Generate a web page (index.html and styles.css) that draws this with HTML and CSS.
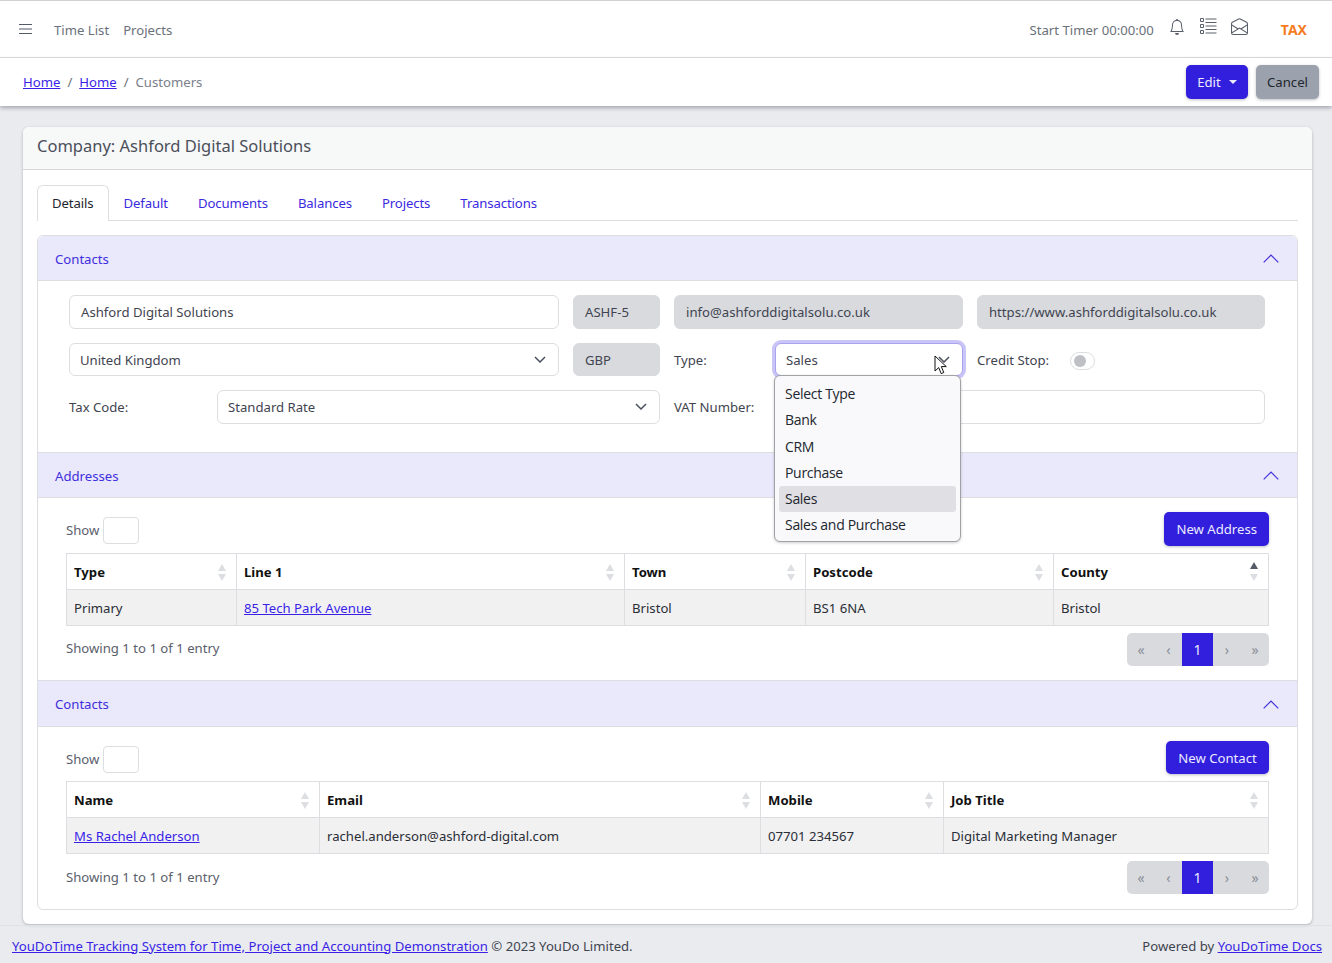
FILE: index.html
```html
<!DOCTYPE html>
<html lang="en">
<head>
    <meta charset="UTF-8">
    <meta name="viewport" content="width=device-width, initial-scale=1.0">
    <title>Company: Ashford Digital Solutions</title>
    <link rel="stylesheet" href="styles.css">
</head>
<body>
    <!-- Top Bar -->
    <header class="topbar">
        <svg class="hamburger" width="14" height="12" viewBox="0 0 14 12"><path d="M0 1.5h13M0 6h13M0 10.5h13" stroke="#555b66" stroke-width="1.1" fill="none"/></svg>
        <a class="top-link" href="#">Time List</a>
        <a class="top-link" href="#">Projects</a>
        <div class="top-right">
            <span class="timer">Start Timer 00:00:00</span>
            <svg class="top-icon icon-bell" width="16" height="16" viewBox="0 0 16 16" fill="#5a606b"><path d="M8 16a2 2 0 0 0 2-2H6a2 2 0 0 0 2 2zM8 1.918l-.797.161A4.002 4.002 0 0 0 4 6c0 .628-.134 2.197-.459 3.742-.16.767-.376 1.566-.663 2.258h10.244c-.287-.692-.502-1.49-.663-2.258C12.134 8.197 12 6.628 12 6a4.002 4.002 0 0 0-3.203-3.92L8 1.917zM14.22 12c.223.447.481.801.78 1H1c.299-.199.557-.553.78-1C2.68 10.2 3 6.88 3 6c0-2.42 1.72-4.44 4.005-4.901a1 1 0 1 1 1.99 0A5.002 5.002 0 0 1 13 6c0 .88.32 4.2 1.22 6z"/></svg>
            <svg class="top-icon icon-list" width="17" height="17" viewBox="0 0 17 17" fill="none" stroke="#5a606b"><path d="M.5.5h3v3h-3zM.5 6.5h3v3h-3zM.5 12.5h3v3h-3zM5.500 1h11M5.500 4.500h11M5.500 8h11M5.500 11.500h11M5.500 15h11"/></svg>
            <svg class="top-icon icon-mail" width="17" height="17" viewBox="0 0 16 16" fill="#5a606b"><path d="M8.470 1.318a1 1 0 0 0-.94 0l-6 3.200A1 1 0 0 0 1 5.400v.817l5.750 3.450L8 8.917l1.250.750L15 6.217V5.400a1 1 0 0 0-.53-.882l-6-3.200zM15 7.383l-4.778 2.867L15 13.117V7.383zm-.035 6.880L8 10.082l-6.965 4.180A1 1 0 0 0 2 15h12a1 1 0 0 0 .965-.738zM1 13.116l4.778-2.867L1 7.383v5.734zM7.059.435a2 2 0 0 1 1.882 0l6 3.200A2 2 0 0 1 16 5.400V14a2 2 0 0 1-2 2H2a2 2 0 0 1-2-2V5.400a2 2 0 0 1 1.059-1.765l6-3.200z"/></svg>
            <span class="tax">TAX</span>
        </div>
    </header>

    <!-- Breadcrumb Bar -->
    <nav class="crumbbar">
        <div class="crumbs">
            <a href="#">Home</a><span class="sep">/</span><a href="#">Home</a><span class="sep">/</span><span class="current">Customers</span>
        </div>
        <div class="crumb-actions">
            <button class="btn btn-primary btn-edit">Edit<span class="caret"></span></button>
            <button class="btn btn-grey">Cancel</button>
        </div>
    </nav>

    <main class="content">
        <div class="card">
            <div class="card-title">Company: Ashford Digital Solutions</div>
            <div class="card-body">
                <!-- Tabs -->
                <ul class="tabs">
                    <li class="tab active">Details</li>
                    <li class="tab">Default</li>
                    <li class="tab">Documents</li>
                    <li class="tab">Balances</li>
                    <li class="tab">Projects</li>
                    <li class="tab">Transactions</li>
                </ul>

                <div class="accordion">
                    <!-- Company Details -->
                    <div class="acc-head">
                        <span>Contacts</span>
                        <svg class="chevron-up" width="16" height="9" viewBox="0 0 16 9"><path d="M.7 8.300 8 1l7.300 7.300" fill="none" stroke="#3f2fdc" stroke-width="1.200"/></svg>
                    </div>
                    <div class="acc-body details">
                        <div class="half">
                            <div class="row-main">
                                <div class="field">Ashford Digital Solutions</div>
                                <div class="field readonly">ASHF-5</div>
                            </div>
                            <div class="row-main">
                                <div class="field select short">United Kingdom<svg class="select-arrow" width="12" height="7" viewBox="0 0 12 7"><path d="M1 1l5 5 5-5" fill="none" stroke="#4b515c" stroke-width="1.500"/></svg></div>
                                <div class="field readonly short">GBP</div>
                            </div>
                            <div class="row-label">
                                <label class="label-tax">Tax Code:</label>
                                <div class="field select">Standard Rate<svg class="select-arrow" width="12" height="7" viewBox="0 0 12 7"><path d="M1 1l5 5 5-5" fill="none" stroke="#4b515c" stroke-width="1.500"/></svg></div>
                            </div>
                        </div>
                        <div class="half">
                            <div class="row-pair">
                                <div class="field readonly">info@ashforddigitalsolu.co.uk</div>
                                <div class="field readonly">https://www.ashforddigitalsolu.co.uk</div>
                            </div>
                            <div class="row-pair">
                                <div class="row-label">
                                    <label class="label-right">Type:</label>
                                    <div class="field select short focused">Sales<svg class="select-arrow" width="12" height="7" viewBox="0 0 12 7"><path d="M1 1l5 5 5-5" fill="none" stroke="#4b515c" stroke-width="1.500"/></svg></div>
                                </div>
                                <div class="row-label credit">
                                    <label class="label-credit">Credit Stop:</label>
                                    <span class="toggle"><span class="knob"></span></span>
                                </div>
                            </div>
                            <div class="row-label">
                                <label class="label-right">VAT Number:</label>
                                <div class="field"></div>
                            </div>

                            <!-- Open Type dropdown -->
                            <ul class="dropdown">
                                <li>Select Type</li>
                                <li>Bank</li>
                                <li>CRM</li>
                                <li>Purchase</li>
                                <li class="selected">Sales</li>
                                <li>Sales and Purchase</li>
                            </ul>
                            <svg class="cursor" width="14" height="20" viewBox="0 0 14 20"><path d="M1 1v15l3.700-3.400 2.500 6 2.600-1.100-2.500-5.900h5z" fill="#fff" stroke="#111" stroke-width="1"/></svg>
                        </div>
                    </div>

                    <!-- Addresses -->
                    <div class="acc-head">
                        <span>Addresses</span>
                        <svg class="chevron-up" width="16" height="9" viewBox="0 0 16 9"><path d="M.7 8.300 8 1l7.300 7.300" fill="none" stroke="#3f2fdc" stroke-width="1.200"/></svg>
                    </div>
                    <div class="acc-body">
                        <div class="toolbar">
                            <div class="show">Show <span class="show-box"></span></div>
                            <button class="btn btn-primary">New Address</button>
                        </div>
                        <table class="data">
                            <colgroup><col class="a1"><col class="a2"><col class="a3"><col class="a4"><col></colgroup>
                            <thead>
                                <tr>
                                    <th>Type<span class="sort"></span></th>
                                    <th>Line 1<span class="sort"></span></th>
                                    <th>Town<span class="sort"></span></th>
                                    <th>Postcode<span class="sort"></span></th>
                                    <th>County<span class="sort asc"></span></th>
                                </tr>
                            </thead>
                            <tbody>
                                <tr>
                                    <td>Primary</td>
                                    <td><a href="#">85 Tech Park Avenue</a></td>
                                    <td>Bristol</td>
                                    <td>BS1 6NA</td>
                                    <td>Bristol</td>
                                </tr>
                            </tbody>
                        </table>
                        <div class="table-foot">
                            <div class="showing">Showing 1 to 1 of 1 entry</div>
                            <div class="pager">
                                <span>«</span><span class="prev">‹</span><span class="on">1</span><span>›</span><span>»</span>
                            </div>
                        </div>
                    </div>

                    <!-- Contacts -->
                    <div class="acc-head tall">
                        <span>Contacts</span>
                        <svg class="chevron-up" width="16" height="9" viewBox="0 0 16 9"><path d="M.7 8.300 8 1l7.300 7.300" fill="none" stroke="#3f2fdc" stroke-width="1.200"/></svg>
                    </div>
                    <div class="acc-body last">
                        <div class="toolbar short">
                            <div class="show">Show <span class="show-box"></span></div>
                            <button class="btn btn-primary btn-short">New Contact</button>
                        </div>
                        <table class="data">
                            <colgroup><col class="c1"><col class="c2"><col class="c3"><col></colgroup>
                            <thead>
                                <tr>
                                    <th>Name<span class="sort"></span></th>
                                    <th>Email<span class="sort"></span></th>
                                    <th>Mobile<span class="sort"></span></th>
                                    <th>Job Title<span class="sort"></span></th>
                                </tr>
                            </thead>
                            <tbody>
                                <tr>
                                    <td><a href="#">Ms Rachel Anderson</a></td>
                                    <td>rachel.anderson@ashford-digital.com</td>
                                    <td>07701 234567</td>
                                    <td>Digital Marketing Manager</td>
                                </tr>
                            </tbody>
                        </table>
                        <div class="table-foot">
                            <div class="showing lower">Showing 1 to 1 of 1 entry</div>
                            <div class="pager">
                                <span>«</span><span class="prev">‹</span><span class="on">1</span><span>›</span><span>»</span>
                            </div>
                        </div>
                    </div>
                </div>
            </div>
        </div>
    </main>

    <footer class="footer">
        <div><a href="#">YouDoTime Tracking System for Time, Project and Accounting Demonstration</a> © 2023 YouDo Limited.</div>
        <div>Powered by <a href="#">YouDoTime Docs</a></div>
    </footer>
</body>
</html>
```

FILE: styles.css
```css
* {
    box-sizing: border-box;
}
body {
    margin: 0;
    padding: 0;
    font-family: "Noto Sans", Arial, sans-serif;
    font-size: 13.15px;
    color: #3f4450;
    background-color: #e9ebee;
}
a {
    color: #3a1fe6;
}
button {
    font-family: inherit;
}

/* Top bar */
.topbar {
    display: flex;
    align-items: center;
    height: 58px;
    padding: 1px 25px 0 19px;
    background-color: #fff;
    border-top: 1px solid #cfd1d4;
    border-bottom: 1px solid #dcdee1;
}
.hamburger {
    margin-right: 21px;
    position: relative;
    top: -1px;
}
.top-link {
    margin-right: 14px;
    color: #6b717b;
    text-decoration: none;
}
.top-right {
    display: flex;
    align-items: center;
    margin-left: auto;
}
.timer {
    color: #6b717b;
}
.top-icon {
    position: relative;
    top: -3px;
}
.icon-bell {
    margin-left: 15px;
}
.icon-list {
    margin-left: 15px;
}
.icon-mail {
    margin-left: 14px;
}
.tax {
    margin-left: 33px;
    font-weight: 700;
    color: #f57c1f;
    font-size: 14px;
}

/* Breadcrumb bar */
.crumbbar {
    display: flex;
    align-items: center;
    justify-content: space-between;
    height: 48px;
    padding: 0 13px 0 23px;
    background-color: #fff;
    box-shadow: 0 2px 4px rgba(40, 44, 70, 0.35);
    position: relative;
}
.sep {
    margin: 0 7px;
    color: #6b717b;
}
.current {
    color: #7a808a;
}
.crumb-actions {
    display: flex;
    gap: 8px;
}
.btn {
    height: 34px;
    padding: 0 12px;
    font-size: 13.15px;
    border: none;
    border-radius: 5px;
    box-shadow: 0 1px 3px rgba(40, 44, 70, 0.3);
}
.btn-primary {
    background-color: #311fdd;
    color: #eceaff;
}
.btn-grey {
    width: 63px;
    padding: 0;
    background-color: #9ca2ad;
    color: #22262e;
}
.btn-edit {
    width: 62px;
    padding: 0;
}
.btn-short {
    width: 103px;
    height: 33px;
    padding: 0;
}
.caret {
    display: inline-block;
    margin-left: 8px;
    vertical-align: 3px;
    border-top: 4px solid #eceaff;
    border-left: 4px solid transparent;
    border-right: 4px solid transparent;
}

/* Main card */
.content {
    padding: 21px 20px 0 23px;
}
.card {
    height: 797px;
    background-color: #fff;
    border-radius: 6px;
    box-shadow: 0 1px 3px rgba(40, 44, 70, 0.3);
}
.card-title {
    height: 43px;
    padding: 7px 14px 0;
    font-size: 16.5px;
    color: #4a4f5a;
    background-color: #f7f8f8;
    border-bottom: 1px solid #d5d7da;
    border-radius: 6px 6px 0 0;
}
.card-body {
    padding: 15px 14px 0;
}
.tabs {
    display: flex;
    height: 36px;
    margin: 0;
    padding: 0;
    list-style: none;
    letter-spacing: -0.1px;
    border-bottom: 1px solid #dcdee1;
}
.tab {
    padding: 9px 15px 0;
    color: #3a2ae0;
}
.tab.active {
    height: 36px;
    color: #22262e;
    background-color: #fff;
    border: 1px solid #dcdee1;
    border-bottom: none;
    border-radius: 6px 6px 0 0;
    padding-top: 8px;
    padding-left: 14px;
    padding-right: 14px;
}

/* Accordion */
.accordion {
    margin-top: 14px;
    border: 1px solid #dcdee1;
    border-radius: 6px;
}
.acc-head {
    display: flex;
    align-items: center;
    justify-content: space-between;
    height: 45px;
    padding: 1px 18px 0 17px;
    color: #3f2fdc;
    background-color: #eae8fb;
    border-bottom: 1px solid #dcdee1;
}
.acc-head.tall {
    height: 46px;
}
.acc-head:first-child {
    border-radius: 6px 6px 0 0;
}
.acc-body {
    padding: 14px 28px 14px 28px;
    border-bottom: 1px solid #dcdee1;
}
.acc-body.last {
    border-bottom: none;
    height: 182px;
}

/* Details form */
.details {
    display: grid;
    grid-template-columns: 591px 591px;
    column-gap: 14px;
    height: 172px;
    padding: 14px 32px 0 31px;
}
.half {
    display: flex;
    flex-direction: column;
    gap: 14px;
    position: relative;
}
.row-main {
    display: grid;
    grid-template-columns: 490px 87px;
    column-gap: 14px;
}
.row-pair {
    display: grid;
    grid-template-columns: 289px 288px;
    column-gap: 14px;
}
.row-label {
    display: flex;
    align-items: center;
}
.row-label .field {
    flex: 1;
}
.label-tax {
    width: 148px;
}
.label-right {
    width: 101px;
}
.label-credit {
    width: 93px;
}
.field {
    display: flex;
    align-items: center;
    position: relative;
    height: 34px;
    padding: 0 11px;
    background-color: #fff;
    border: 1px solid #dcdee1;
    border-radius: 6px;
}
.field.select {
    padding-left: 10px;
}
.field.short {
    height: 33px;
}
.field.readonly {
    background-color: #d8dade;
    border-color: #d8dade;
}
.field.focused {
    border-color: #a9a2f0;
    box-shadow: 0 0 0 3px #c9c5f7;
}
.select-arrow {
    position: absolute;
    right: 12px;
    top: 12px;
}
.toggle {
    display: block;
    width: 25px;
    height: 18px;
    margin-top: 3px;
    padding: 2px 3px;
    background-color: #fff;
    border: 1px solid #dcdee1;
    border-radius: 9px;
}
.knob {
    display: block;
    width: 12px;
    height: 12px;
    background-color: #bfc0c6;
    border-radius: 50%;
}

/* Dropdown */
.dropdown {
    position: absolute;
    top: 80px;
    left: 100px;
    width: 187px;
    height: 167px;
    margin: 0;
    padding: 5px 4px;
    list-style: none;
    font-size: 14px;
    font-family: "Open Sans", Arial, sans-serif;
    letter-spacing: -0.3px;
    color: #22262e;
    background-color: #f9f9fb;
    border: 1px solid #a0a2a6;
    border-radius: 6px;
    box-shadow: 0 1px 3px rgba(0, 0, 0, 0.2);
}
.dropdown li {
    height: 26.300px;
    line-height: 26px;
    padding-left: 6px;
    border-radius: 3px;
}
.dropdown .selected {
    background-color: #e0dfe4;
}
.cursor {
    position: absolute;
    top: 60px;
    left: 260px;
}

/* Tables */
.toolbar {
    display: flex;
    align-items: center;
    justify-content: space-between;
    height: 34px;
    margin-bottom: 7px;
}
.toolbar.short {
    height: 33px;
}
.show {
    display: flex;
    align-items: center;
    gap: 4px;
    padding-top: 2px;
    color: #5a606b;
}
.show-box {
    display: block;
    width: 36px;
    height: 27px;
    margin-top: 1px;
    background-color: #fff;
    border: 1px solid #dcdee1;
    border-radius: 4px;
}
.data {
    width: 1203px;
    table-layout: fixed;
    border-collapse: collapse;
    border: 1px solid #dcdee1;
}
.data th,
.data td {
    padding: 0 7px;
    text-align: left;
    border: 1px solid #dcdee1;
    overflow: hidden;
    white-space: nowrap;
}
.data th {
    position: relative;
    height: 36px;
    font-weight: 700;
    color: #111;
}
.data td {
    height: 36px;
    color: #2a2e36;
    background-color: #f1f1f2;
}
.a1 { width: 170px; }
.a2 { width: 388px; }
.a3 { width: 181px; }
.a4 { width: 248px; }
.c1 { width: 253px; }
.c2 { width: 441px; }
.c3 { width: 183px; }
.sort {
    position: absolute;
    top: 10px;
    right: 10px;
    width: 8px;
    height: 17px;
}
.sort::before,
.sort::after {
    content: "";
    position: absolute;
    left: 0;
    border-left: 4px solid transparent;
    border-right: 4px solid transparent;
}
.sort::before {
    top: 0;
    border-bottom: 7px solid #dcdee1;
}
.sort::after {
    bottom: 0;
    border-top: 7px solid #dcdee1;
}
.sort.asc::before {
    top: -2px;
    border-bottom-color: #555b68;
}
.table-foot {
    display: flex;
    justify-content: space-between;
    margin-top: 7px;
}
.showing {
    padding-top: 6px;
    color: #5a606b;
}
.showing.lower {
    padding-top: 7px;
}
.pager {
    display: flex;
    height: 33px;
    overflow: hidden;
    background-color: #d8dade;
    border-radius: 5px;
    color: #8b8f98;
}
.pager span {
    display: flex;
    align-items: center;
    justify-content: center;
    width: 28px;
    font-size: 14px;
}
.pager .prev {
    width: 27px;
}
.pager .on {
    width: 31px;
    color: #eceaff;
    background-color: #311fdd;
}

/* Footer */
.footer {
    display: flex;
    justify-content: space-between;
    align-items: center;
    height: 38px;
    margin-top: 1px;
    padding: 2px 10px 0 12px;
    color: #3f4450;
    border-top: 1px solid #dfe1e4;
}
```
